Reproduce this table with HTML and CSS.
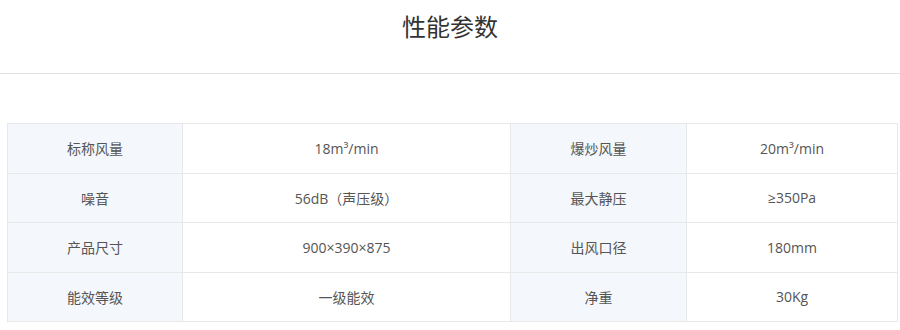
FILE: index.html
```html
<!DOCTYPE html>
<html lang="zh">
<head>
<meta charset="utf-8">
<link rel="stylesheet" href="styles.css">
</head>
<body>
<div class="header"><h2 class="title">性能参数</h2></div>
<div class="wrap">
<table class="spec">
<colgroup><col class="c1"><col class="c2"><col class="c3"><col class="c4"></colgroup>
<tr><td class="lab">标称风量</td><td>18m³/min</td><td class="lab">爆炒风量</td><td>20m³/min</td></tr>
<tr><td class="lab">噪音</td><td>56dB（声压级）</td><td class="lab">最大静压</td><td>≥350Pa</td></tr>
<tr><td class="lab">产品尺寸</td><td>900×390×875</td><td class="lab">出风口径</td><td>180mm</td></tr>
<tr><td class="lab">能效等级</td><td>一级能效</td><td class="lab">净重</td><td>30Kg</td></tr>
</table>
</div>
</body>
</html>
```
FILE: styles.css
```css
html, body { margin: 0; padding: 0; background: #fff; }
body { font-family: "Open Sans", "Noto Sans CJK SC", sans-serif; color: #555; }
.header { height: 73px; border-bottom: 1px solid #e3e3e3; display: flex; justify-content: center; }
.title { margin: 9px 0 0; font-family: "Noto Sans CJK SC", sans-serif; font-size: 24px; font-weight: 400; color: #333; line-height: 34px; }
.wrap { padding: 49px 4px 0 7px; }
.spec { width: 890px; border-collapse: collapse; table-layout: fixed; font-size: 14px; }
.c1 { width: 175px; } .c2 { width: 328px; } .c3 { width: 176px; } .c4 { width: 211px; }
.spec td { border: 1px solid #e8e8e8; height: 48.5px; padding: 0; text-align: center; vertical-align: middle; color: #555; }
.spec td.lab { background: #f4f7fb; }
```
